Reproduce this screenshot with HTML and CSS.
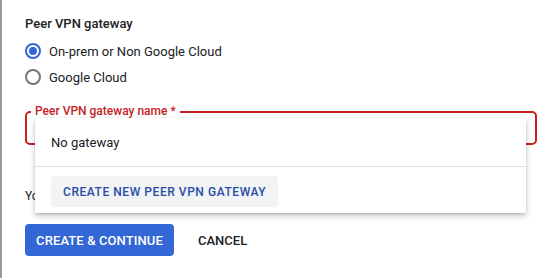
FILE: index.html
```html
<!DOCTYPE html>
<html>
<head>
<meta charset="utf-8">
<link rel="stylesheet" href="styles.css">
</head>
<body>
<div class="page">
  <div class="title">Peer VPN gateway</div>
  <div class="radios">
    <label class="radio-row">
      <span class="radio checked"><span class="dot"></span></span>
      <span class="radio-label">On-prem or Non Google Cloud</span>
    </label>
    <label class="radio-row">
      <span class="radio"></span>
      <span class="radio-label">Google Cloud</span>
    </label>
  </div>
  <div class="field">
    <span class="field-label">Peer VPN gateway name *</span>
    <div class="menu">
      <div class="menu-item">No gateway</div>
      <div class="menu-divider"></div>
      <div class="menu-actions">
        <button class="menu-btn">CREATE NEW PEER VPN GATEWAY</button>
      </div>
    </div>
  </div>
  <div class="helper">You must create a peer VPN gateway</div>
  <div class="actions">
    <button class="btn-primary">CREATE &amp; CONTINUE</button>
    <button class="btn-flat">CANCEL</button>
  </div>
</div>
</body>
</html>
```

FILE: styles.css
```css
html, body {
  margin: 0;
  padding: 0;
  background: #ffffff;
}
body {
  font-family: Roboto, "Liberation Sans", Arial, sans-serif;
  color: #202124;
  width: 539px;
  height: 278px;
  overflow: hidden;
}
.page {
  border-left: 2px solid #9a9a9a;
  height: 278px;
  box-sizing: border-box;
  padding: 14px 0 0 23px;
}
.title {
  font-size: 13px;
  font-weight: 500;
  line-height: 20px;
  color: #202124;
}
.radios {
  display: flex;
  flex-direction: column;
  margin-top: 4px;
}
.radio-row {
  display: flex;
  align-items: center;
  height: 26px;
  gap: 8px;
}
.radio {
  width: 16px;
  height: 16px;
  box-sizing: border-box;
  border: 2px solid #757575;
  border-radius: 50%;
  display: flex;
  align-items: center;
  justify-content: center;
}
.radio.checked {
  border-color: #3367d6;
}
.dot {
  width: 8px;
  height: 8px;
  border-radius: 50%;
  background: #3367d6;
}
.radio-label {
  font-size: 13px;
  color: #202124;
}
.field {
  position: relative;
  margin-top: 21px;
  width: 512px;
  height: 34px;
  box-sizing: border-box;
  border: 2px solid #c5221f;
  border-radius: 5px;
}
.field-label {
  position: absolute;
  left: 4px;
  top: -9px;
  padding: 0 4px 0 4px;
  background: #fff;
  font-size: 12px;
  font-weight: 500;
  line-height: 14px;
  color: #c5221f;
}
.menu {
  position: absolute;
  left: 8px;
  top: 5px;
  width: 491px;
  background: #fff;
  box-shadow: 0 3px 6px rgba(0,0,0,0.22), 0 1px 2px rgba(0,0,0,0.12);
  z-index: 2;
}
.menu-item {
  height: 48px;
  display: flex;
  align-items: center;
  padding-left: 16px;
  font-size: 13px;
  color: #202124;
}
.menu-divider {
  height: 1px;
  background: #e0e0e0;
}
.menu-actions {
  padding: 9px 16px 6px 16px;
}
.menu-btn {
  height: 31px;
  padding: 0 12px;
  border: none;
  border-radius: 4px;
  background: #f1f3f4;
  color: #2a4ba8;
  font-family: inherit;
  font-size: 12px;
  font-weight: 500;
  letter-spacing: 0.55px;
}
.helper {
  margin-top: 43px;
  font-size: 12px;
  line-height: 16px;
  color: #202124;
  white-space: nowrap;
}
.actions {
  display: flex;
  gap: 8px;
  margin-top: 20px;
}
.btn-primary {
  width: 149px;
  height: 32px;
  border: none;
  border-radius: 4px;
  background: #3367d6;
  color: #fff;
  font-family: inherit;
  font-size: 13px;
  font-weight: 500;
  letter-spacing: 0.1px;
  padding: 0;
}
.btn-flat {
  height: 32px;
  border: none;
  background: transparent;
  color: #202124;
  font-family: inherit;
  font-size: 13px;
  font-weight: 500;
  padding: 0 16px;
}
```
